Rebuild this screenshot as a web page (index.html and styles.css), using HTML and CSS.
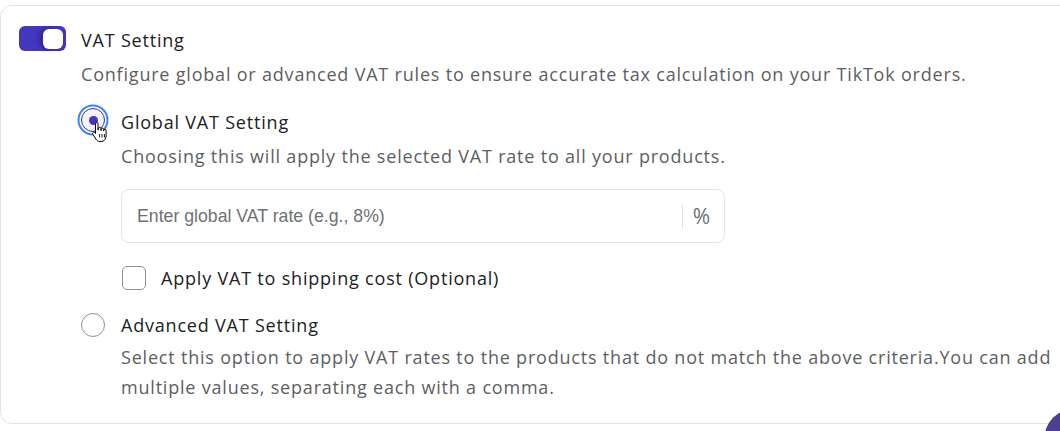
FILE: index.html
```html
<!DOCTYPE html>
<html lang="en">
<head>
<meta charset="utf-8">
<title>VAT Setting</title>
<link rel="stylesheet" href="styles.css">
</head>
<body>
<div class="card">
  <div class="head">
    <span class="toggle"><span class="knob"></span></span>
    <span class="title">VAT Setting</span>
  </div>
  <p class="desc intro">Configure global or advanced VAT rules to ensure accurate tax calculation on your TikTok orders.</p>
  <div class="options">
    <div class="option">
      <span class="radio checked"><span class="dot"></span></span>
      <div class="opt-body">
        <div class="opt-title">Global VAT Setting</div>
        <p class="desc">Choosing this will apply the selected VAT rate to all your products.</p>
        <div class="field">
          <span class="placeholder">Enter global VAT rate (e.g., 8%)</span>
          <span class="sep"></span>
          <span class="suffix">%</span>
        </div>
        <label class="check"><span class="box"></span><span>Apply VAT to shipping cost (Optional)</span></label>
      </div>
    </div>
    <div class="option adv">
      <span class="radio"></span>
      <div class="opt-body">
        <div class="opt-title">Advanced VAT Setting</div>
        <p class="desc wrap">Select this option to apply VAT rates to the products that do not match the above criteria.You can add multiple values, separating each with a comma.</p>
      </div>
    </div>
  </div>
</div>
<div class="chat"></div>
<svg class="cursor" width="18" height="23" viewBox="0 0 18 23">
  <path d="M5.5 1.5c.8 0 1.5.6 1.5 1.4V9h.3V7.6c0-.8.6-1.3 1.3-1.3s1.3.5 1.3 1.3v1.9h.3V8.4c0-.7.6-1.2 1.2-1.2s1.2.5 1.2 1.2V10h.3v-.7c0-.6.5-1.1 1.1-1.1s1.1.5 1.1 1.1V15c0 3-2 5.5-5 5.5H9c-2 0-3.2-1-4.2-2.5L1.8 13.3c-.4-.7-.2-1.4.4-1.8.6-.4 1.4-.2 1.8.4l.5.6V2.9c0-.8.7-1.4 1.5-1.4z" fill="#fff" stroke="#000" stroke-width="1" stroke-linejoin="round"/>
  <path d="M8.6 13v3.5M11 13v3.5M13.4 13v3.5" stroke="#000" stroke-width="0.9" fill="none"/>
</svg>
</body>
</html>
```

FILE: styles.css
```css
html, body {
  margin: 0;
  padding: 0;
  background: #ffffff;
  overflow: hidden;
  height: 431px;
}

body {
  font-family: "Open Sans", "Lato", sans-serif;
  font-size: 18px;
  letter-spacing: 0.8px;
  color: #202223;
}

.card {
  margin-top: 5px;
  width: 1100px;
  box-sizing: border-box;
  border: 1px solid #e3e3e3;
  border-radius: 12px;
  padding: 19px 18px 21px 18px;
  background: #fff;
}

.head {
  display: flex;
  align-items: center;
  gap: 15px;
  height: 30px;
}

.toggle {
  width: 47px;
  height: 25px;
  border-radius: 6px;
  background: #4437bd;
  display: flex;
  align-items: center;
  justify-content: flex-end;
  padding-right: 3px;
  box-sizing: border-box;
  margin-top: -3px;
}

.knob {
  width: 20px;
  height: 20px;
  border-radius: 6px;
  background: #fff;
  box-shadow: -3px 0 5px rgba(20, 10, 80, 0.45);
}

.title, .opt-title {
  line-height: 30px;
  color: #202223;
}

.desc {
  margin: 4px 0 0;
  line-height: 30px;
  color: #5c5f62;
}

.intro {
  margin-left: 62px;
}

.options {
  margin-left: 62px;
  margin-top: 18px;
  display: flex;
  flex-direction: column;
  gap: 17px;
}

.option {
  display: grid;
  grid-template-columns: 24px 1fr;
  column-gap: 16px;
  align-items: start;
}

.radio {
  width: 24px;
  height: 24px;
  box-sizing: border-box;
  border-radius: 50%;
  border: 1px solid #8c8f94;
  margin-top: 3px;
  display: flex;
  align-items: center;
  justify-content: center;
  background: #fff;
}

.radio.checked {
  border: 1.5px solid #3b2f8f;
  background: #f3f1fb;
  box-shadow: 0 0 0 1.5px #fff, 0 0 0 3.5px #3b82f6;
  margin-top: 1px;
}

.dot {
  width: 9px;
  height: 9px;
  border-radius: 50%;
  background: #4437bd;
}

.field {
  margin-top: 18px;
  width: 604px;
  height: 54px;
  box-sizing: border-box;
  border: 1px solid #e1e3e5;
  border-radius: 8px;
  display: flex;
  align-items: center;
  padding-left: 15px;
}

.placeholder {
  flex: 1;
  font-family: "Liberation Sans", Arial, sans-serif;
  font-size: 17.7px;
  letter-spacing: 0;
  color: #6d7175;
}

.sep {
  width: 1px;
  height: 25px;
  background: #e1e3e5;
}

.suffix {
  padding: 0 14px 0 10px;
  color: #6d7175;
  font-size: 21px;
  letter-spacing: 0;
}

.check {
  margin-top: 20px;
  display: flex;
  align-items: center;
  gap: 15px;
  line-height: 30px;
  color: #202223;
}

.box {
  width: 24px;
  height: 24px;
  box-sizing: border-box;
  border: 1px solid #8c9196;
  border-radius: 5px;
  margin-left: 1px;
}

.adv .desc {
  margin-top: 2px;
  width: 950px;
}

.chat {
  position: fixed;
  left: 1044px;
  top: 408px;
  width: 64px;
  height: 64px;
  border-radius: 50%;
  background: #4b3e94;
}

.cursor {
  position: absolute;
  left: 91px;
  top: 121px;
}
```
